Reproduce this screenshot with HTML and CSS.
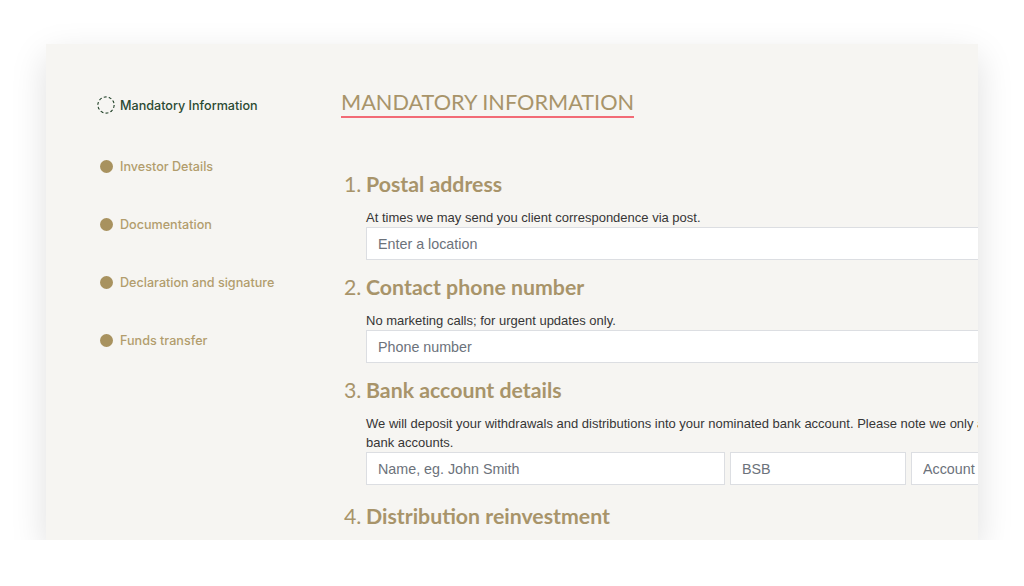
FILE: index.html
```html
<!DOCTYPE html>
<html lang="en">
<head>
  <meta charset="UTF-8" />
  <title>Mandatory Information</title>
  <link rel="stylesheet" href="styles.css">
</head>
<body>
  <div class="card">
    <ul class="steps">
      <li class="step active">
        <svg class="marker" width="18" height="18" viewBox="0 0 18 18"><circle cx="9" cy="9" r="8.2" fill="none" stroke="#2b4a32" stroke-width="1.3" stroke-dasharray="3 2.15"/></svg>
        Mandatory Information
      </li>
      <li class="step"><span class="marker"></span>Investor Details</li>
      <li class="step"><span class="marker"></span>Documentation</li>
      <li class="step"><span class="marker"></span>Declaration and signature</li>
      <li class="step"><span class="marker"></span>Funds transfer</li>
    </ul>

    <div class="main">
      <h1 class="title">MANDATORY INFORMATION</h1>

      <div class="section">
        <h2><span class="num">1.</span>Postal address</h2>
        <p class="hint">At times we may send you client correspondence via post.</p>
        <input type="text" placeholder="Enter a location">
      </div>

      <div class="section">
        <h2><span class="num">2.</span>Contact phone number</h2>
        <p class="hint">No marketing calls; for urgent updates only.</p>
        <input type="text" placeholder="Phone number">
      </div>

      <div class="section">
        <h2><span class="num">3.</span>Bank account details</h2>
        <p class="hint">We will deposit your withdrawals and distributions into your nominated bank account. Please note we only accept Australian bank accounts.</p>
        <div class="row">
          <input type="text" class="name" placeholder="Name, eg. John Smith">
          <input type="text" class="bsb" placeholder="BSB">
          <input type="text" class="acct" placeholder="Account number">
        </div>
      </div>

      <div class="section last">
        <h2><span class="num">4.</span>Distribution reinvestment</h2>
      </div>
    </div>
  </div>
</body>
</html>
```

FILE: styles.css
```css
body {
  margin: 0;
  background: #fff;
  font-family: 'Liberation Sans', Arial, sans-serif;
  padding: 44px 0 0 46px;
}

.card {
  width: 932px;
  height: 496px;
  background: #f6f5f2;
  box-shadow: 0 12px 34px rgba(0, 0, 0, 0.13);
  display: flex;
  overflow: hidden;
}

.steps {
  list-style: none;
  margin: 0;
  padding: 52px 0 0 51px;
  width: 244px;
  flex-shrink: 0;
}

.step {
  display: flex;
  align-items: center;
  height: 18px;
  margin-bottom: 40px;
  font-family: 'Inter', sans-serif;
  font-size: 12.6px;
  font-weight: 500;
  color: #b29d6d;
}

.step:first-child {
  margin-bottom: 43px;
}

.step .marker {
  width: 13px;
  height: 13px;
  border-radius: 50%;
  background: #a8925f;
  margin: 0 7px 0 3px;
  flex-shrink: 0;
}

.step.active {
  color: #2b4a32;
}

.step.active .marker {
  width: 18px;
  height: 18px;
  background: none;
  margin: 0 5px 0 0;
}

.main {
  width: 746px;
  flex-shrink: 0;
}

.title {
  display: inline-block;
  margin: 45px 0 0;
  padding-bottom: 1px;
  border-bottom: 2px solid #f26b76;
  font-family: 'Lato', sans-serif;
  font-weight: 400;
  font-size: 21.7px;
  color: #a8946a;
  line-height: 26px;
}

.section {
  padding-left: 25px;
  margin-top: 53px;
}

.section + .section {
  margin-top: 14px;
}

.section.last {
  margin-top: 18px;
}

h2 {
  margin: 0 0 0 -22px;
  font-family: 'Lato', sans-serif;
  font-weight: 700;
  font-size: 21.3px;
  color: #a8946a;
  line-height: 26px;
}

h2 .num {
  display: inline-block;
  width: 22px;
  font-weight: 400;
}

.hint {
  margin: 11px 0 0;
  font-size: 13px;
  line-height: 19px;
  color: #363636;
}

input {
  display: block;
  box-sizing: border-box;
  width: 721px;
  height: 33px;
  padding: 0 11px;
  border: 1px solid #dcdee2;
  border-radius: 0;
  background: #fff;
  font-family: 'Liberation Sans', Arial, sans-serif;
  font-size: 14.3px;
  outline: none;
}

input::placeholder {
  color: #6c727b;
}

.row {
  display: flex;
  gap: 5px;
  width: 721px;
}

.row .name { width: 359px; }
.row .bsb { width: 176px; }
.row .acct { width: 176px; }
```
